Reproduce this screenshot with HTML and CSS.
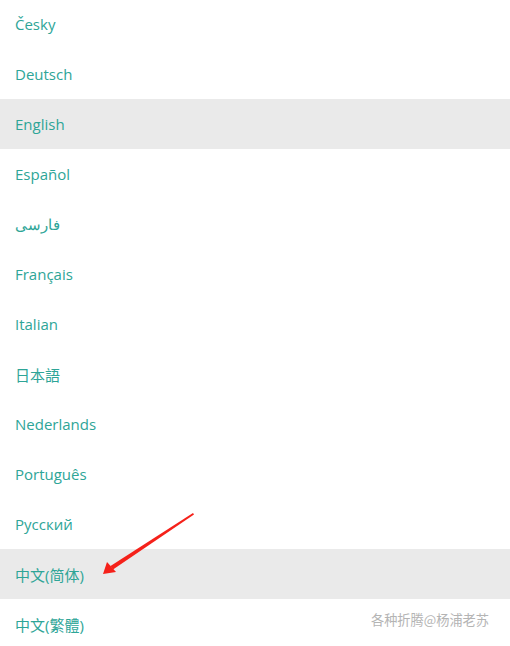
FILE: index.html
```html
<!DOCTYPE html>
<html>
<head>
<meta charset="utf-8">
<link rel="stylesheet" href="styles.css">
</head>
<body>
<ul class="lang-list">
  <li class="item">Česky</li>
  <li class="item">Deutsch</li>
  <li class="item active">English</li>
  <li class="item">Español</li>
  <li class="item">فارسی</li>
  <li class="item">Français</li>
  <li class="item">Italian</li>
  <li class="item">日本語</li>
  <li class="item">Nederlands</li>
  <li class="item">Português</li>
  <li class="item">Русский</li>
  <li class="item active">中文(简体)</li>
  <li class="item">中文(繁體)</li>
</ul>
<svg class="arrow" width="510" height="646" viewBox="0 0 510 646">
  <polygon points="193,513 194,514.5 113,569.5 110.5,566" fill="#f5211a"/>
  <polygon points="103,574 107,562 116,572" fill="#f5211a"/>
</svg>
<div class="watermark">各种折腾@杨浦老苏</div>
</body>
</html>
```
FILE: styles.css
```css
html, body {
  margin: 0;
  padding: 0;
  background: #fff;
}
body {
  width: 510px;
  height: 646px;
  overflow: hidden;
  position: relative;
  font-family: "Open Sans", "Noto Sans", "Noto Sans CJK SC", sans-serif;
}
.lang-list {
  list-style: none;
  margin: -1px 0 0 0;
  padding: 0;
}
.item {
  height: 50px;
  display: flex;
  align-items: center;
  padding-left: 15px;
  font-size: 15px;
  color: #2ea597;
}
.item.active {
  background: #eaeaea;
}
.arrow {
  position: absolute;
  left: 0;
  top: 0;
  pointer-events: none;
}
.watermark {
  position: absolute;
  left: 371px;
  top: 610px;
  font-size: 13.2px;
  color: #b4b4b4;
  font-family: "Noto Sans CJK SC", sans-serif;
}
```
